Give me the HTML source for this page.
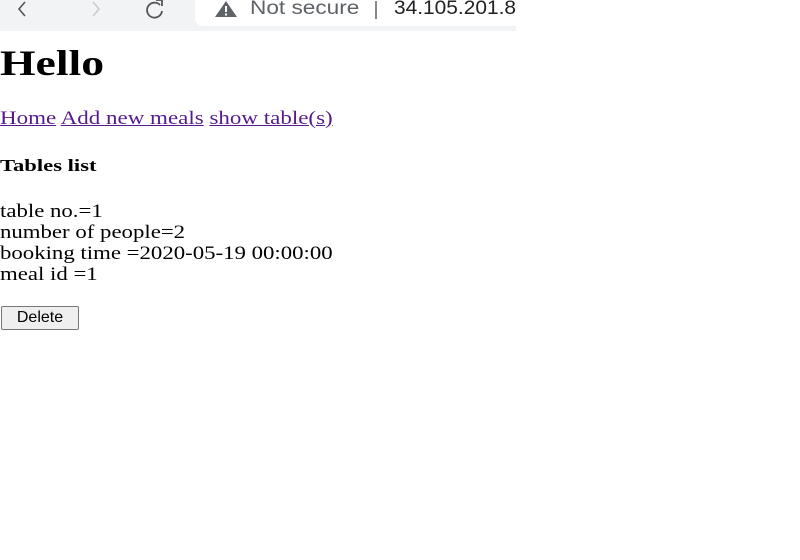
<!DOCTYPE html>
<html><head><style>
body{margin:0;width:800px;height:560px;background:#fff;font-family:"Liberation Serif",serif;color:#000;position:relative;overflow:hidden}
.bar{position:absolute;left:0;top:0;width:516px;height:31px;background:#f1f3f4}
.addr{position:absolute;left:195px;top:-10px;width:330px;height:36px;background:#fff;border-radius:8px}
.t{position:absolute;white-space:nowrap;transform-origin:0 0}
a{color:#551a8b;text-decoration:underline}
</style></head><body>
<div class="bar"></div>
<div class="addr"></div>
<svg class="t" style="left:14px;top:0" width="20" height="20"><path d="M11 2 L5 9 L11 16" stroke="#555" stroke-width="1.6" fill="none"/></svg>
<svg class="t" style="left:88px;top:0" width="20" height="20"><path d="M5 2 L11 9 L5 16" stroke="#ccc" stroke-width="1.6" fill="none"/></svg>
<svg class="t" style="left:140px;top:0" width="26" height="22"><path d="M20 5 A7.5 7.5 0 1 0 22 11" stroke="#555" stroke-width="1.8" fill="none"/><path d="M16 0 L22 0 L22 6" stroke="#555" stroke-width="1.8" fill="none"/></svg>
<svg class="t" style="left:214px;top:0" width="26" height="18"><path d="M12 1 L23 17 L1 17 Z" fill="#5f6368"/><rect x="11" y="6" width="2" height="6" fill="#fff"/><rect x="11" y="13.5" width="2" height="2" fill="#fff"/></svg>
<div class="t" style="left:250px;top:-2px;font:19px 'Liberation Sans',sans-serif;color:#5f6368;transform:scaleX(1.19)">Not secure</div>
<div class="t" style="left:375px;top:1px;width:1.5px;height:18px;background:#888"></div>
<div class="t" style="left:394px;top:-2px;font:19px 'Liberation Sans',sans-serif;color:#202124;transform:scaleX(1.1)">34.105.201.8</div>
<div class="t" style="left:0;top:42px;font-size:36px;font-weight:bold;transform:scaleX(1.27)">Hello</div>
<div class="t" style="left:0;top:108px;font-size:19px;transform:scaleX(1.21)"><a>Home</a> <a>Add new meals</a> <a>show table(s)</a></div>
<div class="t" style="left:0;top:156px;font-size:17px;font-weight:bold;transform:scaleX(1.33)">Tables list</div>
<div class="t" style="left:0;top:201px;font-size:19px;line-height:21px;transform:scaleX(1.2)">table no.=1<br>number of people=2<br>booking time =2020-05-19 00:00:00<br>meal id =1</div>
<div class="t" style="left:1px;top:306px;width:78px;height:24px;border:1px solid #767676;background:#efefef;box-sizing:border-box;border-radius:2px;font:16px 'Liberation Sans',sans-serif;text-align:center;line-height:22px">Delete</div>
</body></html>
